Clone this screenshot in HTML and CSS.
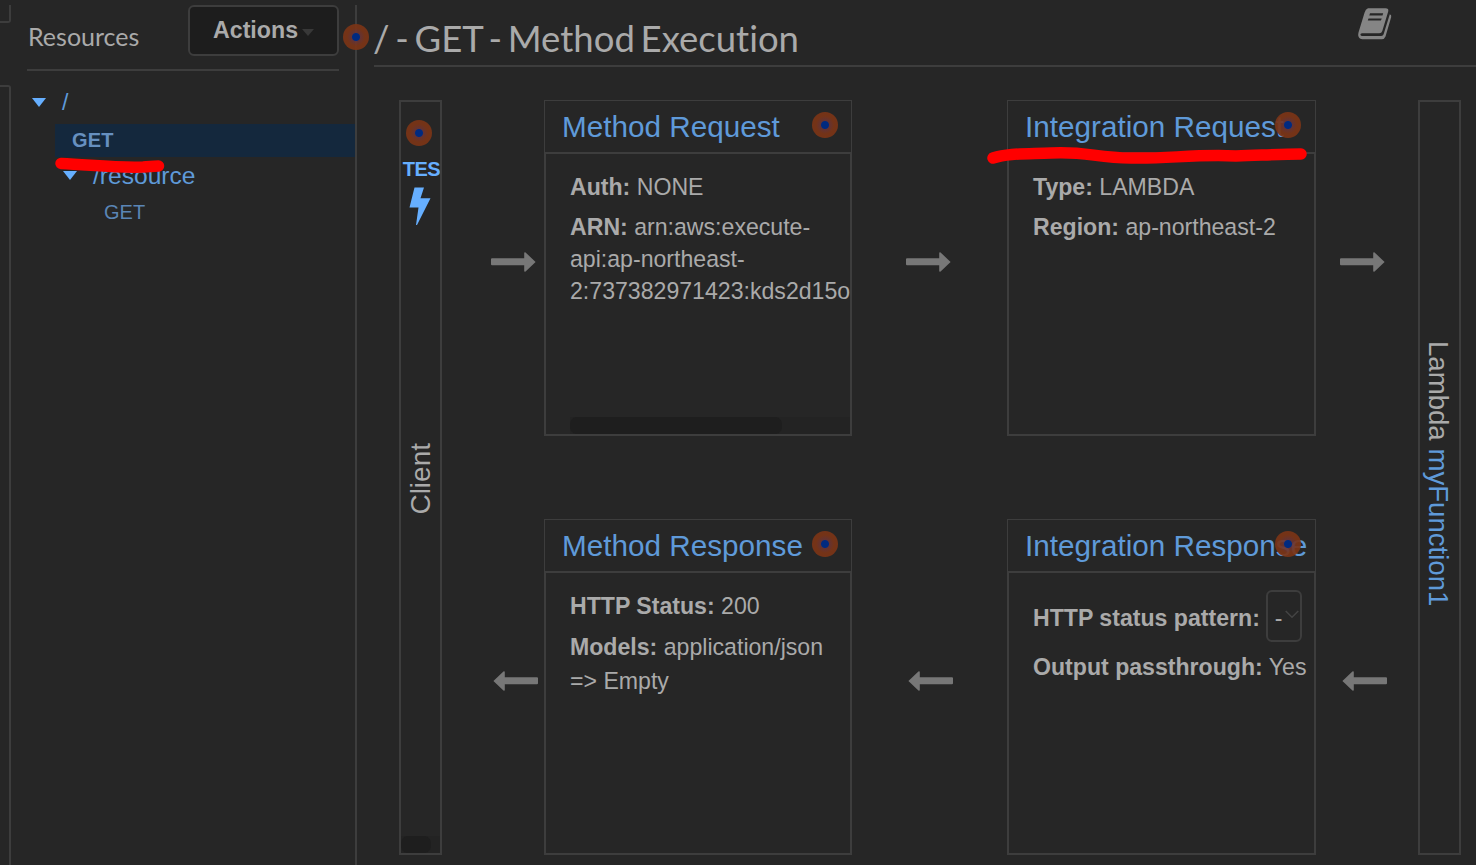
FILE: index.html
```html
<!DOCTYPE html>
<html lang="en">
<head>
<meta charset="utf-8">
<title>Method Execution</title>
<link rel="stylesheet" href="styles.css">
</head>
<body>
<svg class="defs" width="0" height="0">
  <symbol id="arrow" viewBox="0 0 45 20"><path d="M1 6.3H33.2V1.2Q33.2 0 34.6 .5L44.6 10 34.6 19.5Q33.2 20 33.2 18.800V13.300H1Q0 13.300 0 12.300V7.300Q0 6.300 1 6.300Z" fill="#777"/></symbol>
</svg>
<div class="app">
  <div class="rail"><div class="rail-top"></div><div class="rail-rest"></div></div>
  <aside class="sidebar">
    <div class="side-head">
      <h2 class="side-title">Resources</h2>
      <button class="actions">Actions<span class="caret"></span></button>
    </div>
    <ul class="tree">
      <li class="node root"><span class="tri"></span><a>/</a></li>
      <li class="node selected"><a>GET</a></li>
      <li class="node child"><span class="tri"></span><a>/resource</a></li>
      <li class="node leaf"><a>GET</a></li>
    </ul>
    <span class="marker split-marker"></span>
    <svg class="stroke stroke-get" width="112" height="20"><path d="M8 8.500C40 10 65 13 90 12 98 11.500 100 11 105.500 11" /></svg>
  </aside>
  <main class="main">
    <header class="main-head">
      <h1 class="title">/ - GET - Method Execution</h1>
      <svg class="book" width="34" height="32" viewBox="0 0 34 32"><path fill="#858585" fill-rule="evenodd" d="M10 .3H27.500Q31 .3 30.200 3.500L24.300 23Q23.600 25.200 21.300 25.200H4Q2.200 25.200 2.400 26.800 2.700 28 4.300 28H23.200Q25 28 25.600 26.200L31.800 6.200Q33.700 7 33.200 9L27.500 28.500Q26.500 31.200 23.800 31.200H4.500Q1.500 31.200.3 28 0 26.500.5 24.500L6.600 4.500Q7.500 1 10 .3ZM12 5.200 11.300 7.400H24.500L25.200 5.200ZM10.500 10.400 9.800 12.600H23L23.700 10.400Z"/></svg>
    </header>
    <div class="flow">
      <section class="endpoint client">
        <span class="marker"></span>
        <a class="test">TES</a>
        <svg class="bolt" width="22" height="38" viewBox="0 0 22 38"><path fill="#66afff" d="M5.500 .5H15L11.500 11.200H21.500L8 38H7L9.500 20.500H.5Z"/></svg>
        <span class="client-label">Client</span>
        <div class="scroll client-scroll"></div>
      </section>
      <svg class="arrow a1"><use href="#arrow"/></svg>
      <article class="card c1">
        <header class="card-head"><a>Method Request</a><span class="marker"></span></header>
        <div class="card-body">
          <p><b>Auth:</b> NONE</p>
          <p><b>ARN:</b> arn:aws:execute-<br>api:ap-northeast-<br>2:737382971423:kds2d15o</p>
          <div class="scroll card-scroll"></div>
        </div>
      </article>
      <svg class="arrow a2"><use href="#arrow"/></svg>
      <article class="card c2">
        <header class="card-head"><a>Integration Request</a><span class="marker"></span></header>
        <div class="card-body">
          <p><b>Type:</b> LAMBDA</p>
          <p><b>Region:</b> ap-northeast-2</p>
        </div>
        <svg class="stroke stroke-integration" width="324" height="26"><path d="M7 12C22 7 40 8 65 7 100 5 110 12 145 12 180 13 210 8 250 10 280 9 295 8 315 8"/></svg>
      </article>
      <svg class="arrow a3"><use href="#arrow"/></svg>
      <svg class="arrow b1"><use href="#arrow"/></svg>
      <article class="card d1">
        <header class="card-head"><a>Method Response</a><span class="marker"></span></header>
        <div class="card-body">
          <p><b>HTTP Status:</b> 200</p>
          <p class="models"><b>Models:</b> application/json<br>=&gt; Empty</p>
        </div>
      </article>
      <svg class="arrow b2"><use href="#arrow"/></svg>
      <article class="card d2">
        <header class="card-head"><a>Integration Response</a><span class="marker"></span></header>
        <div class="card-body response-body">
          <div class="pattern"><b>HTTP status pattern:</b><span class="select">-<svg width="14" height="9" viewBox="0 0 14 9"><path d="M.7 1 7 7.300 13.300 1" fill="none" stroke="#444" stroke-width="1.500"/></svg></span></div>
          <p><b>Output passthrough:</b> Yes</p>
        </div>
      </article>
      <svg class="arrow b3"><use href="#arrow"/></svg>
      <section class="endpoint lambda"><span class="lambda-label">Lambda <a>myFunction1</a></span></section>
    </div>
  </main>
</div>
</body>
</html>
```
FILE: styles.css
```css
* { box-sizing: border-box; }
body { margin: 0; background: #262626; color: #aaa; font-family: "Liberation Sans", Arial, sans-serif; font-size: 23.12px; overflow: hidden; }
h1, h2, p, ul { margin: 0; padding: 0; font-weight: 400; }
.defs { position: absolute; }
.app { display: flex; height: 865px; padding-top: 5px; }

.rail { width: 11px; display: flex; flex-direction: column; gap: 62px; }
.rail-top { height: 18px; border: solid #3d3d3d; border-width: 0 2px 2px 0; border-bottom-right-radius: 3px; }
.rail-rest { flex: 1; border: solid #3d3d3d; border-width: 2px 2px 0 0; border-top-right-radius: 3px; }

.sidebar { position: relative; width: 346px; padding-left: 16px; border-right: 2px solid #3d3d3d; }
.side-head { display: flex; justify-content: space-between; align-items: flex-start; width: 312px; height: 66px; border-bottom: 2px solid #3d3d3d; }
.side-title { font: 25px/30px Lato, sans-serif; padding: 16px 0 0 1px; }
.actions { display: flex; align-items: center; gap: 4px; width: 151px; height: 51px; padding: 0 0 1px 23px; background: #1d1d1d; border: 2px solid #3d3d3d; border-radius: 6px; color: #aaa; font: bold 23.2px "Liberation Sans", sans-serif; }
.caret { border: 6.5px solid transparent; border-top: 7px solid #383838; border-bottom: 0; margin-top: 5px; }
.tree { list-style: none; padding-top: 13px; }
.node { display: flex; align-items: center; height: 36px; color: #5f9ad9; }
.tri { border: 7.5px solid transparent; border-top: 9px solid #66afff; border-bottom: 0; }
.root { padding-left: 5px; gap: 16px; }
.selected { height: 33px; margin: 4px 0 0 28px; padding-left: 17px; background: #14283d; color: #6690c0; font-weight: bold; font-size: 20px; letter-spacing: .2px; }
.child { height: 37px; padding-left: 36px; gap: 16px; font-size: 24.6px; }
.leaf { padding-left: 77px; color: #5a85b5; font-size: 20px; }

.marker { display: block; flex: none; width: 26px; height: 26px; border-radius: 50%; background: radial-gradient(circle, #002a80 0 3.500px, rgba(106, 52, 52, .9) 4.500px, rgba(122, 52, 22, .93) 9px); }
.split-marker { position: absolute; left: 332px; top: 19px; }
.stroke { position: absolute; fill: none; stroke: #f00; stroke-width: 11.500px; stroke-linecap: round; }
.stroke-get { left: 42px; top: 150px; }

.main { flex: 1; padding-left: 17px; }
.main-head { display: flex; justify-content: space-between; height: 62px; padding-right: 84px; border-bottom: 2px solid #3d3d3d; }
.title { font: 36.5px/44px Lato, sans-serif; padding-top: 11px; margin-left: -1px; word-spacing: -3.6px; font-variant-ligatures: none; }
.book { margin-top: 3px; }

.flow { display: grid; grid-template-columns: 43px 102px 308px 155px 309px 102px 43px; grid-template-rows: 336px 336px; row-gap: 83px; padding: 33px 0 0 25px; }
.endpoint { grid-row: 1 / 3; border: 2px solid #3d3d3d; display: flex; flex-direction: column; align-items: center; overflow: hidden; }
.client { position: relative; grid-column: 1; padding-top: 18px; }
.client > .marker { margin-right: 3px; }
.test { margin: 11px 0 0 2px; color: #66afff; font: bold 20px/24px "Liberation Sans", sans-serif; letter-spacing: -.5px; }
.bolt { margin: 6px 1px 0 0; }
.client-label { writing-mode: vertical-rl; transform: rotate(180deg); margin-top: 218px; font-size: 28px; line-height: 36px; }
.lambda { grid-column: 7; padding: 239px 4px 0 0; }
.lambda-label { writing-mode: vertical-rl; font-size: 27.6px; line-height: 36px; white-space: nowrap; }
.lambda-label a, .card-head a { color: #5f9ad9; }

.arrow { width: 45px; height: 20px; align-self: center; margin-bottom: 12px; }
.a1, .a2, .a3 { grid-row: 1; }
.b1, .b2, .b3 { grid-row: 2; transform: scaleX(-1); }
.a1 { grid-column: 2; margin-left: 49px; }
.a2 { grid-column: 4; margin-left: 54px; }
.a3 { grid-column: 6; margin-left: 24px; }
.b1 { grid-column: 2; margin-left: 50.5px; }
.b2 { grid-column: 4; margin-left: 55.5px; }
.b3 { grid-column: 6; margin-left: 25.5px; }

.card { position: relative; display: flex; flex-direction: column; min-width: 0; }
.c1, .d1 { grid-column: 3; }
.c2, .d2 { grid-column: 5; }
.c1, .c2 { grid-row: 1; }
.d1, .d2 { grid-row: 2; }
.card-head { height: 52px; padding: 0 0 0 17px; border: 1px solid #3d3d3d; border-bottom: 0; font-size: 29.7px; line-height: 51px; white-space: nowrap; }
.card-head .marker { position: absolute; left: 268px; top: 12px; }
.card-body { position: relative; flex: 1; padding: 17px 0 0 24px; border: 2px solid #3d3d3d; overflow: hidden; white-space: nowrap; line-height: 32px; }
.card-body p + p { margin-top: 8px; }
.card-body .models { line-height: 34px; }
.scroll { background: #232323; }
.scroll::before { content: ""; display: block; height: 100%; border-radius: 7px; background: #1e1e1e; }
.card-scroll { position: absolute; left: 24px; right: 0; bottom: 0; height: 17px; }
.card-scroll::before { width: 212px; }
.client-scroll { position: absolute; left: 0; right: 0; bottom: 0; height: 17px; }
.client-scroll::before { width: 30px; }
.response-body { padding-top: 17px; }
.pattern { display: flex; align-items: center; gap: 6px; height: 52px; margin-bottom: 9px; padding-top: 3px; }
.select { display: flex; align-items: center; gap: 2px; width: 36px; height: 52px; margin-top: -3px; padding: 4px 0 0 7px; border: 2px solid #3d3d3d; border-radius: 6px; }
.select svg { margin-top: -7px; }
.stroke-integration { left: -21px; top: 45.5px; }
```
